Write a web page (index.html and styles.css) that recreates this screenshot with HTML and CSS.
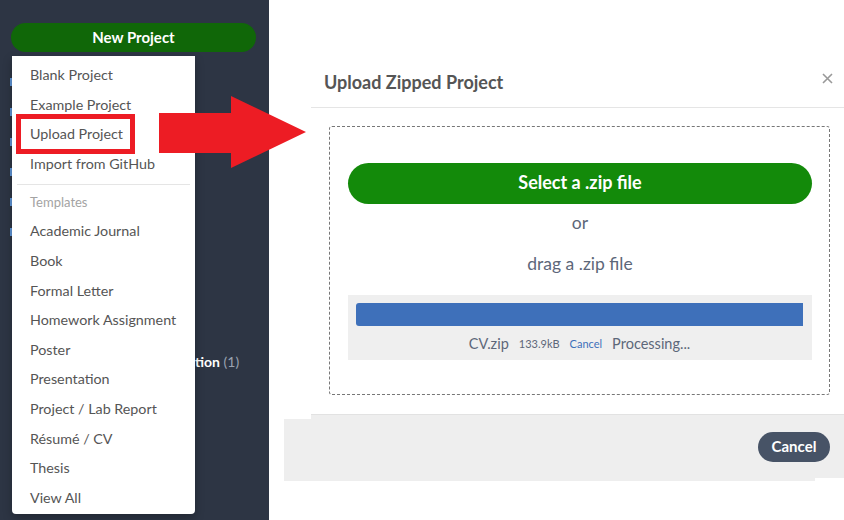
FILE: index.html
```html
<!DOCTYPE html>
<html lang="en">
<head>
<meta charset="utf-8">
<title>Upload Zipped Project</title>
<link rel="stylesheet" href="styles.css">
</head>
<body>
<div class="app">
  <aside class="sidebar">
    <button class="btn-new">New Project</button>
    <ul class="nav">
      <li><span class="nav-mark"></span></li>
      <li><span class="nav-mark"></span></li>
      <li><span class="nav-mark"></span></li>
      <li><span class="nav-mark"></span></li>
      <li><span class="nav-mark"></span></li>
      <li><span class="nav-mark"></span></li>
    </ul>
    <div class="tag"><span class="tag-name">tion</span> <span class="tag-count">(1)</span></div>

    <div class="menu">
      <div class="menu-item">Blank Project</div>
      <div class="menu-item">Example Project</div>
      <div class="menu-item">Upload Project</div>
      <div class="menu-item">Import from GitHub</div>
      <div class="menu-divider"></div>
      <div class="menu-header">Templates</div>
      <div class="menu-item">Academic Journal</div>
      <div class="menu-item">Book</div>
      <div class="menu-item">Formal Letter</div>
      <div class="menu-item">Homework Assignment</div>
      <div class="menu-item">Poster</div>
      <div class="menu-item">Presentation</div>
      <div class="menu-item">Project / Lab Report</div>
      <div class="menu-item">Résumé / CV</div>
      <div class="menu-item">Thesis</div>
      <div class="menu-item">View All</div>
    </div>
    <div class="highlight"></div>
  </aside>

  <main class="main">
    <div class="modal">
      <div class="modal-header">
        <h3 class="modal-title">Upload Zipped Project</h3>
        <svg class="close" viewBox="0 0 11 11" width="11" height="11"><path d="M1 1L10 10M10 1L1 10" stroke="#999" stroke-width="1.6" fill="none"/></svg>
      </div>
      <div class="modal-body">
        <div class="dropzone">
          <button class="btn-select">Select a .zip file</button>
          <div class="or">or</div>
          <div class="drag">drag a .zip file</div>
          <div class="progress">
            <div class="bar"></div>
            <div class="info">
              <span class="fname">CV.zip</span>
              <span class="fsize">133.9kB</span>
              <span class="fcancel">Cancel</span>
              <span class="fstatus">Processing...</span>
            </div>
          </div>
        </div>
      </div>
      <div class="modal-footer">
        <button class="btn-cancel">Cancel</button>
      </div>
    </div>
  </main>

  <svg class="arrow" viewBox="0 0 148 73" width="148" height="73"><polygon points="0,17 72,17 72,0 147,36 72,72 72,57 0,57" fill="#ed1c24"/></svg>
</div>
</body>
</html>
```

FILE: styles.css
```css
* { box-sizing: border-box; }
html, body { margin: 0; padding: 0; }
body {
  font-family: Lato, "Open Sans", "Liberation Sans", sans-serif;
  background: #fff;
  width: 844px;
  height: 520px;
  overflow: hidden;
}
.app {
  position: relative;
  display: flex;
  height: 520px;
}
.sidebar {
  position: relative;
  width: 269px;
  flex: none;
  background: #2d3544;
  padding: 23px 13px 0 11px;
}
.btn-new {
  display: block;
  width: 245px;
  height: 29px;
  border: 0;
  border-radius: 15px;
  background: #106708;
  color: #fff;
  font-family: inherit;
  font-weight: 700;
  font-size: 15px;
  padding: 0 0 2px;
}
.nav {
  list-style: none;
  margin: 15px 0 0;
  padding: 0;
}
.nav li {
  height: 30px;
  display: flex;
  align-items: center;
}
.nav-mark {
  display: block;
  width: 6px;
  height: 8px;
  border-left: 2px solid #5e93d3;
  margin-left: -1px;
}
.tag {
  margin-top: 100px;
  line-height: 30px;
  font-size: 14px;
  padding-left: 184px;
}
.tag-name { color: #fff; font-weight: 700; }
.tag-count { color: #9aa3b1; }

.menu {
  position: absolute;
  top: 56px;
  left: 12px;
  width: 183px;
  background: #fff;
  border-radius: 0 0 4px 4px;
  box-shadow: 0 4px 10px rgba(0,0,0,0.25);
  padding: 4px 0 2px;
}
.menu-item {
  height: 29.6px;
  line-height: 29.6px;
  padding: 0 18px;
  font-size: 14.3px;
  color: #555;
  white-space: nowrap;
}
.menu-divider {
  height: 1px;
  margin: 6px 5px 3px;
  background: #e5e5e5;
}
.menu-header {
  height: 28px;
  line-height: 28px;
  padding: 0 18px;
  font-size: 13px;
  color: #a3a3a3;
}
.highlight {
  position: absolute;
  left: 16px;
  top: 114px;
  width: 119px;
  height: 40px;
  border: 5px solid #ed1c24;
}
.arrow {
  position: absolute;
  left: 159px;
  top: 96px;
}

.main {
  flex: 1;
  padding: 57px 0 0 42px;
}
.modal {
  width: 533px;
}
.modal-header {
  height: 51px;
  display: flex;
  align-items: center;
  justify-content: space-between;
  padding: 0 11px 0 13px;
  border-bottom: 1px solid #e5e5e5;
}
.modal-title {
  margin: 0;
  font-size: 18px;
  font-weight: 700;
  color: #555;
}
.close { margin-top: -8px; }
.modal-body {
  padding: 18px 14px 19px 18px;
}
.dropzone {
  border: 1px dashed #777;
  border-radius: 3px;
  padding: 36px 17px 34px 18px;
  text-align: center;
}
.btn-select {
  display: block;
  width: 100%;
  height: 41px;
  border: 0;
  border-radius: 21px;
  background: #138a0a;
  color: #fff;
  font-family: inherit;
  font-weight: 700;
  font-size: 18px;
  padding: 0 0 3px;
}
.or {
  line-height: 38px;
  font-size: 17.5px;
  color: #5d6779;
}
.drag {
  line-height: 44px;
  font-size: 17.5px;
  color: #5d6779;
  margin-bottom: 9px;
}
.progress {
  height: 65px;
  background: #efefef;
  padding: 8px 9px 0 8px;
}
.bar {
  height: 23px;
  background: #3e70ba;
  border-radius: 3px 0 0 3px;
}
.info {
  height: 34px;
  display: flex;
  justify-content: center;
  align-items: center;
  gap: 10px;
  color: #5d6779;
}
.fname, .fstatus { font-size: 14.5px; }
.fsize { font-size: 11px; }
.fcancel { font-size: 11px; color: #3e70ba; }

.modal-footer {
  height: 64px;
  background: #eee;
  border-top: 1px solid #e2e2e2;
  box-shadow: -28px 4px 0 -1px #eee;
  display: flex;
  align-items: center;
  justify-content: flex-end;
  padding-right: 14px;
}
.btn-cancel {
  width: 72px;
  height: 30px;
  border: 0;
  border-radius: 15px;
  background: #475366;
  color: #fff;
  font-family: inherit;
  font-weight: 700;
  font-size: 15px;
  padding: 0 0 1px;
}
```
